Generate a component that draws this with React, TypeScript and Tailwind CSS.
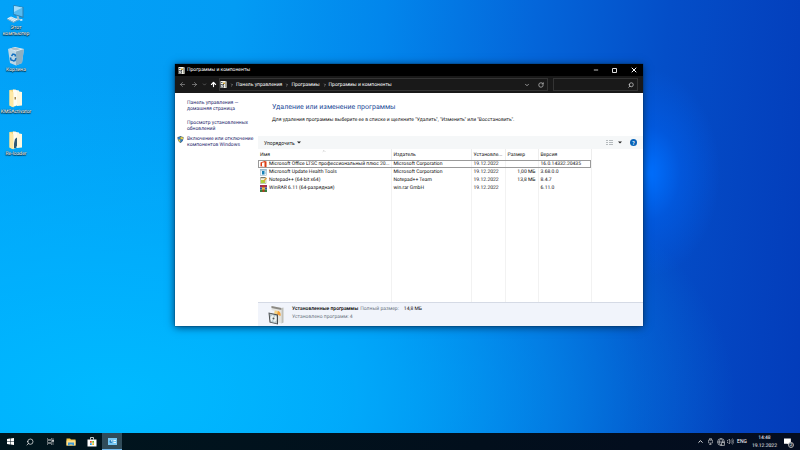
import { ReactNode } from "react";
import { ArrowLeft, ArrowRight, ArrowUp, ChevronDown, ChevronRight, ChevronUp, Minus, RotateCw, Search, X } from "lucide-react";

type Program = {
  name: string;
  publisher: string;
  installed: string;
  size: string;
  version: string;
  icon: ReactNode;
};

const OfficeIcon = () => (
  <svg viewBox="0 0 14 14" className="size-[7px] shrink-0">
    <path d="M1 3 9 0l4 1.2v11.6L9 14l-8-3 8 1V2.5L4 3.7v6.4L1 11z" fill="#dc3e15" />
  </svg>
);

const UpdateIcon = () => (
  <svg viewBox="0 0 14 14" className="size-[7px] shrink-0">
    <rect x="1" y="1" width="12" height="12" fill="#eef6fa" stroke="#8aa5b5" />
    <path d="M1 1h12v2H1z" fill="#7ba8c4" />
    <rect x="4" y="4" width="5" height="7" fill="#1681b8" />
    <path d="M10 5h2v5h-2z" fill="#b8d4e2" />
  </svg>
);

const NotepadIcon = () => (
  <svg viewBox="0 0 14 14" className="size-[7px] shrink-0">
    <path d="M1 2h11v11H1z" fill="#f4f3dc" stroke="#8b8b72" />
    <path d="M2 6h8v6H2z" fill="#a8d83c" />
    <path d="m6 8 6-7 2 1.5-6 7-2.5 1z" fill="#e5a030" />
    <path d="M1 0h10v2H1z" fill="#77776a" />
  </svg>
);

const WinrarIcon = () => (
  <svg viewBox="0 0 14 14" className="size-[7px] shrink-0">
    <path d="M0 0h14v5H0z" fill="#a02b58" />
    <path d="M0 5h14v4H0z" fill="#3451a8" />
    <path d="M0 9h14v5H0z" fill="#34803d" />
    <path d="M5 0h4v14H5z" fill="#b83a20" />
    <path d="M4 5h6v4H4z" fill="#e8c24a" />
  </svg>
);

const PanelIcon = () => (
  <svg viewBox="0 0 14 14" className="size-[7px] shrink-0">
    <path d="M1 0h9l3 1v13H1z" fill="#f2f2ea" />
    <path d="M10 1h3v12h-3z" fill="#a9a99c" />
    <path d="M1 6h7v7H1z" fill="#35393b" />
    <circle cx="4.5" cy="9.5" r="2.6" fill="#dfe6e6" />
    <circle cx="4.5" cy="9.5" r=".9" fill="#35393b" />
    <path d="M6 3h4v3H6z" fill="#c9a23a" />
    <path d="M2 2h3v2H2z" fill="#525b5c" />
  </svg>
);

const ShieldIcon = () => (
  <svg viewBox="0 0 14 14" className="size-[7px]">
    <path d="M7 0c2 1.4 4 1.9 6 1.9C13.2 8 11 12 7 14 3 12 .8 8 1 1.9 3 1.9 5 1.4 7 0z" fill="#35566c" />
    <path d="M7 1.5V7H2l-.1-4C4 2.9 5.500 2.4 7 1.5z" fill="#2f7ed0" />
    <path d="M7 1.5V7h5l.1-4C10 2.9 8.500 2.4 7 1.5z" fill="#f3d544" />
    <path d="M7 7v5.8C4.500 11.5 2.8 9.5 2.2 7z" fill="#f3d544" />
    <path d="M7 7v5.8c2.500-1.300 4.200-3.300 4.800-5.800z" fill="#2f7ed0" />
  </svg>
);

const InstalledIcon = () => (
  <svg viewBox="0 0 32 40" className="h-5 w-4 shrink-0">
    <path d="M7 2 27 6v31l-14-4V12L7 10z" fill="#e4e4df" />
    <path d="m7 2 20 4v4L7 6z" fill="#8b8984" />
    <path d="m27 6 4-1v30l-4 2z" fill="#bfc0ba" />
    <path d="M17 12c7-1 9 4 8 10l-7-3z" fill="#f3a038" />
    <path d="m14 11 6 1-2 7-6-2z" fill="#f5d489" />
    <path d="m1 15 19 4v20L3 35z" fill="#4a4e50" />
    <path d="m3 17 15 4v16L5 34z" fill="#b9c5c8" />
    <ellipse cx="11" cy="27" rx="6" ry="7" fill="#edf3f3" />
    <circle cx="11" cy="27" r="2" fill="#51595c" />
    <path d="m11 20 3 1-2 4zM10 29l-2 4 3 1z" fill="#96b3bd" />
  </svg>
);

const ComputerIcon = () => (
  <svg viewBox="0 0 40 40" className="size-5">
    <path d="m15 2 20 4v22l-20-6z" fill="#2f7fae" />
    <path d="m16 4 17 3v18l-17-5z" fill="#56baf0" />
    <path d="m16 4 17 3-17 9z" fill="#a1dcfa" />
    <path d="m21 23 5 2v4l5 2-7 2-6-3 4-2z" fill="#9ebed0" />
    <path d="m2 29 8-4 14 6-9 5z" fill="#e5f4fb" />
    <path d="m2 29 13 7 9-5v2l-9 5-13-7z" fill="#77a9c5" />
    <path d="m6 29 10 5M9 27l11 5" stroke="#8fb9d0" />
    <path d="m27 32 4-2 3 2-4 2z" fill="#e2f3fc" />
  </svg>
);

const RecycleIcon = () => (
  <svg viewBox="0 0 40 40" className="size-5">
    <path d="m4 6 16 4 16-4-4 28-12 5-12-5z" fill="#bdd7e5" />
    <path d="M20 10 36 6l-4 28-12 5z" fill="#8eafc1" />
    <path d="m4 6 14-4 18 4-16 5z" fill="#e3eff5" />
    <path d="m8 6 6-3 8 1 8 2-10 3z" fill="#aebfc9" />
    <path d="m11 20 3-4 4 1 1 4M9 23l1 5 4 1M20 24l-2 5-4 1" fill="none" stroke="#116fc0" strokeWidth="3" />
  </svg>
);

const FolderIcon = ({ mark }: { mark: "dot" | "bar" }) => (
  <svg viewBox="0 0 40 40" className="size-5">
    <path d="m7 4 13-1v33l-7 2-6-3z" fill="#f5d77c" />
    <path d="m14 3 12 2v29l-12 3z" fill="#fffdf3" />
    <path d="m22 6 10 2v27l-10 1z" fill="#fff8df" />
    <path d="m7 4 8 5v30l-8-4z" fill="#ffe9a4" />
    {mark === "dot" ? (
      <path d="M17 18h3v5h-3z" fill="#a58b54" />
    ) : (
      <path d="m18 18 4-3v16l-2 5h-4v-9z" fill="#315a76" />
    )}
  </svg>
);

const programs: Program[] = [
  { name: "Microsoft Office LTSC профессиональный плюс 20...", publisher: "Microsoft Corporation", installed: "19.12.2022", size: "", version: "16.0.14332.20435", icon: <OfficeIcon /> },
  { name: "Microsoft Update Health Tools", publisher: "Microsoft Corporation", installed: "19.12.2022", size: "1,00 МБ", version: "3.68.0.0", icon: <UpdateIcon /> },
  { name: "Notepad++ (64-bit x64)", publisher: "Notepad++ Team", installed: "19.12.2022", size: "13,8 МБ", version: "8.4.7", icon: <NotepadIcon /> },
  { name: "WinRAR 6.11 (64-разрядная)", publisher: "win.rar GmbH", installed: "19.12.2022", size: "", version: "6.11.0", icon: <WinrarIcon /> },
];

const shortcuts = [
  { label: "Этот компьютер", icon: <ComputerIcon /> },
  { label: "Корзина", icon: <RecycleIcon /> },
  { label: "KMSActivator", icon: <FolderIcon mark="dot" /> },
  { label: "Re-loader", icon: <FolderIcon mark="bar" /> },
];

const crumbs = ["Панель управления", "Программы", "Программы и компоненты"];

function TitleBar() {
  return (
    <header className="flex h-3 items-center bg-black pl-[3px] text-white">
      <PanelIcon />
      <h1 className="ml-[2px] flex-1">Программы и компоненты</h1>
      <button aria-label="Свернуть" className="grid h-3 w-[19px] place-items-center"><Minus className="size-[6px]" strokeWidth={3} /></button>
      <button aria-label="Развернуть" className="grid h-3 w-[19px] place-items-center">
        <svg viewBox="0 0 5 5" className="size-[5px]"><path d="M.5.5h4v4h-4z" fill="none" stroke="#ddd" /></svg>
      </button>
      <button aria-label="Закрыть" className="grid h-3 w-[19px] place-items-center"><X className="size-[8px]" strokeWidth={3} /></button>
    </header>
  );
}

function AddressBar() {
  return (
    <nav className="flex h-[17px] items-center bg-[#191919] pr-[5px] pl-1 text-white">
      <button aria-label="Назад" className="w-3 text-[#aaa]"><ArrowLeft className="size-[7px]" /></button>
      <button aria-label="Вперёд" className="w-[11px] text-[#aaa]"><ArrowRight className="size-[7px]" /></button>
      <button aria-label="Журнал" className="w-2 text-[#aaa]"><ChevronDown className="size-[5px]" /></button>
      <button aria-label="Вверх" className="w-[9px]"><ArrowUp className="size-[7px]" strokeWidth={4} /></button>
      <div className="flex h-[13px] flex-1 items-center border border-[#343434]">
        <PanelIcon />
        {crumbs.map((crumb) => (
          <span key={crumb} className="flex items-center">
            <ChevronRight className="mr-[2px] ml-[3px] size-[4px] text-[#ddd]" strokeWidth={3} />
            <a href="#">{crumb}</a>
          </span>
        ))}
        <button aria-label="Список" className="ml-auto w-[14px] text-[#bbb]"><ChevronDown className="size-[6px]" strokeWidth={3} /></button>
        <button aria-label="Обновить" className="w-[9px] text-[#bbb]"><RotateCw className="size-[6px]" strokeWidth={3} /></button>
      </div>
      <label className="ml-[5px] flex h-[13px] w-[85px] items-center border border-[#343434] pr-[3px]">
        <input aria-label="Поиск" type="text" className="min-w-0 flex-1 bg-transparent outline-none" />
        <Search className="size-[6px] -scale-x-100 text-[#ccc]" strokeWidth={3} />
      </label>
    </nav>
  );
}

function Sidebar() {
  return (
    <aside className="w-[83px] shrink-0 pt-[7px] pl-3 leading-[6px] text-[#26266b]">
      <a href="#" className="block">Панель управления —<br />домашняя страница</a>
      <a href="#" className="mt-2 block">Просмотр установленных<br />обновлений</a>
      <a href="#" className="relative mt-1 block whitespace-nowrap">
        <span className="absolute top-0 -left-[10px]"><ShieldIcon /></span>
        Включение или отключение<br />компонентов Windows
      </a>
    </aside>
  );
}

function ProgramTable() {
  return (
    <table className="h-[153px] w-[333px] table-fixed border-collapse text-left whitespace-nowrap text-[#111]">
      <colgroup>
        <col className="w-[133px]" />
        <col className="w-[80px]" />
        <col className="w-[34px]" />
        <col className="w-[33px]" />
        <col className="w-[53px]" />
      </colgroup>
      <thead>
        <tr className="h-[11px] [&>th]:border-r [&>th]:border-[#ededed] [&>th]:p-0 [&>th]:pl-[2px] [&>th]:font-normal">
          <th className="relative">
            Имя
            <ChevronUp className="absolute top-0 left-16 size-1 text-[#777]" />
          </th>
          <th>Издатель</th>
          <th>Установле...</th>
          <th>Размер</th>
          <th>Версия</th>
        </tr>
      </thead>
      <tbody className="[&_td]:border-r [&_td]:border-[#f2f2f2] [&_td]:p-0 [&_td]:pl-[2px]">
        {programs.map((p, i) => (
          <tr key={p.name} className={i === 0 ? "h-2 outline outline-[#9a9a9a] -outline-offset-1" : "h-2"}>
            <td>
              <div className="flex h-2 items-center gap-[2px]">{p.icon}{p.name}</div>
            </td>
            <td>{p.publisher}</td>
            <td>{p.installed}</td>
            <td><div className="pr-[2px] text-right">{p.size}</div></td>
            <td>{p.version}</td>
          </tr>
        ))}
        <tr>
          <td /><td /><td /><td /><td />
        </tr>
      </tbody>
    </table>
  );
}

function ProgramsWindow() {
  return (
    <section className="absolute top-16 left-[175px] flex w-[468px] flex-col bg-white text-[5px] leading-[6px] shadow-[0_1px_8px_#00305a,0_0_1px_#001a30]">
      <TitleBar />
      <AddressBar />
      <div className="flex">
        <Sidebar />
        <main className="min-w-0 flex-1">
          <div className="h-[43px] pt-[10px] pl-[14px]">
            <h2 className="text-[7px] leading-2 text-[#1c4b98]">Удаление или изменение программы</h2>
            <p className="mt-[6px] text-[#111]">Для удаления программы выберите ее в списке и щелкните "Удалить", "Изменить" или "Восстановить".</p>
          </div>
          <div className="flex h-[13px] items-center bg-[#f5f7f8] pr-[6px] pl-[6px] text-[#222]">
            <button className="flex items-center gap-[2px]">
              Упорядочить
              <svg viewBox="0 0 8 6" className="h-[3px] w-1"><path d="M0 1h8L4 5z" fill="#222" /></svg>
            </button>
            <button aria-label="Вид" className="ml-auto flex items-center gap-[5px]">
              <svg viewBox="0 0 14 12" className="h-[6px] w-[7px]">
                <path d="M0 0h4v2H0zM0 4h4v2H0zM0 8h4v2H0zM6 0h8v2H6zM6 4h8v2H6zM6 8h8v2H6z" fill="#b5babd" />
              </svg>
              <svg viewBox="0 0 8 6" className="h-[3px] w-1"><path d="M0 1h8L4 5z" fill="#222" /></svg>
            </button>
            <button aria-label="Справка" className="ml-2 grid size-[7px] place-items-center rounded-full bg-[#0863b8] font-bold text-white">?</button>
          </div>
          <ProgramTable />
          <footer className="flex h-6 items-center border-t border-[#d5dae5] bg-[#f1f4fb] pl-[10px]">
            <InstalledIcon />
            <div className="mb-[3px] ml-2 leading-2">
              <p className="flex text-[#111]">
                <span className="font-semibold">Установленные программы</span>
                <span className="ml-[2px] text-[#6c7482]">Полный размер:</span>
                <span className="ml-[5px]">14,8 МБ</span>
              </p>
              <p className="text-[#6c7482]">Установлено программ: 4</p>
            </div>
          </footer>
        </main>
      </div>
    </section>
  );
}

function Taskbar() {
  return (
    <footer className="flex h-[17px] items-center bg-[linear-gradient(90deg,#00161e,#020f1c_60%,#040d20)] text-[5px] text-white">
      <button aria-label="Пуск" className="grid h-full w-5 place-items-center">
        <svg viewBox="0 0 14 14" className="size-[7px]"><path d="m0 2 6-1v5.500H0zM7 .9 14 0v6.500H7zM0 7.500h6V13l-6-1zM7 7.500h7V14l-7-1z" fill="#fff" /></svg>
      </button>
      <button aria-label="Поиск" className="grid h-full w-5 place-items-center"><Search className="size-2 -scale-x-100" /></button>
      <button aria-label="Представление задач" className="grid h-full w-5 place-items-center">
        <svg viewBox="0 0 14 14" className="size-[7px]" fill="none" stroke="#ddd"><path d="M1 0v3h8V0M1 14v-3h8v3M1 5h8v4H1zM12 0v14" /><path d="M11 4h2v3h-2z" fill="#fff" /></svg>
      </button>
      <button aria-label="Проводник" className="grid h-full w-[22px] place-items-center">
        <svg viewBox="0 0 20 16" className="h-2 w-[10px]"><path d="M1 1h7l2 2h9v12H1z" fill="#f6c947" /><path d="M1 5h18v10H1z" fill="#ffe08a" /><path d="M4 9h12v6h-3v-2H7v2H4z" fill="#3e99d7" /></svg>
      </button>
      <button aria-label="Магазин" className="grid h-full w-5 place-items-center">
        <svg viewBox="0 0 20 20" className="size-[10px]"><path d="M1 5h18v14H1z" fill="#fff" /><path d="M7 5V1h6v4" fill="none" stroke="#fff" strokeWidth="1.500" /><path d="M6 8h3.500v3.500H6z" fill="#e65525" /><path d="M10.500 8H14v3.500h-3.500z" fill="#78b928" /><path d="M6 12.500h3.500V16H6z" fill="#279ee0" /><path d="M10.500 12.500H14V16h-3.500z" fill="#f3b625" /></svg>
      </button>
      <button aria-label="Программы и компоненты" className="grid h-full w-5 place-items-center border-b border-[#71b9ef] bg-[#304c5a]">
        <svg viewBox="0 0 18 14" className="h-[7px] w-[9px]"><path d="M0 0h18v14H0z" fill="#77c7f3" /><circle cx="6" cy="7" r="3" fill="#267dbd" /><path d="M6 7V4a3 3 0 0 1 3 3zM11 4h5v2h-5zM11 8h5v2h-5z" fill="#e6f7ff" /></svg>
      </button>
      <div className="ml-auto flex h-full items-center pr-2">
        <button aria-label="Скрытые значки" className="w-[10px]"><ChevronUp className="size-[7px]" strokeWidth={3} /></button>
        <svg viewBox="0 0 14 14" className="mr-[3px] size-[7px]" fill="none" stroke="#ddd"><path d="M5 1h4v3H5zM3 4h8v6H3zM7 10v3M4 13h5" /></svg>
        <svg viewBox="0 0 14 14" className="mr-[2px] size-2" fill="none" stroke="#eee"><circle cx="7" cy="7" r="6" /><path d="M1 7h12M7 1c-4 4-4 8 0 12M7 1c4 4 4 8 0 12" /><path d="M8 8h5v5H8z" fill="#06101d" /></svg>
        <svg viewBox="0 0 14 14" className="mr-[3px] size-[7px]" fill="none" stroke="#ddd"><path d="M0 5h2l3-3v10L2 9H0zM7 5q2 2 0 4M9 3q4 4 0 8M11 1q5 6 0 12" /></svg>
        <button className="mr-[5px]">ENG</button>
        <time className="mr-[7px] text-center leading-2">14:48<br />19.12.2022</time>
        <button aria-label="Уведомления" className="relative">
          <svg viewBox="0 0 14 14" className="size-2"><path d="M0 1h12v9H9v3l-3-3H0z" fill="#fff" /></svg>
          <span className="absolute -right-[2px] -bottom-[2px] size-[6px] rounded-full border border-[#aaa] bg-[#222d3c] text-[4px] leading-1">2</span>
        </button>
      </div>
    </footer>
  );
}

export default function App() {
  return (
    <div className="flex min-h-screen flex-col font-[Roboto,'Noto_Sans',sans-serif] [text-rendering:geometricPrecision]">
      <div className="relative flex-1 bg-[radial-gradient(ellipse_9%_24%_at_81%_40%,#0070ff,#0062f080_45%,#0050d800),radial-gradient(ellipse_78%_75%_at_14%_92%,#00baff,#00b4ffcc_35%,#00a0f000),linear-gradient(95deg,#02a2f8_0%,#039cf4_28%,#0286ec_46%,#0466da_64%,#044ec8_80%,#033cba_100%)]">
        <nav className="flex w-8 flex-col pt-1">
          {shortcuts.map((s) => (
            <a key={s.label} href="#" className="flex h-[42px] flex-col items-center gap-[1px] text-center text-[5px] leading-[6px] text-white [text-shadow:0_1px_1px_#000,0_0_1px_#000]">
              {s.icon}
              {s.label}
            </a>
          ))}
        </nav>
        <ProgramsWindow />
      </div>
      <Taskbar />
    </div>
  );
}
